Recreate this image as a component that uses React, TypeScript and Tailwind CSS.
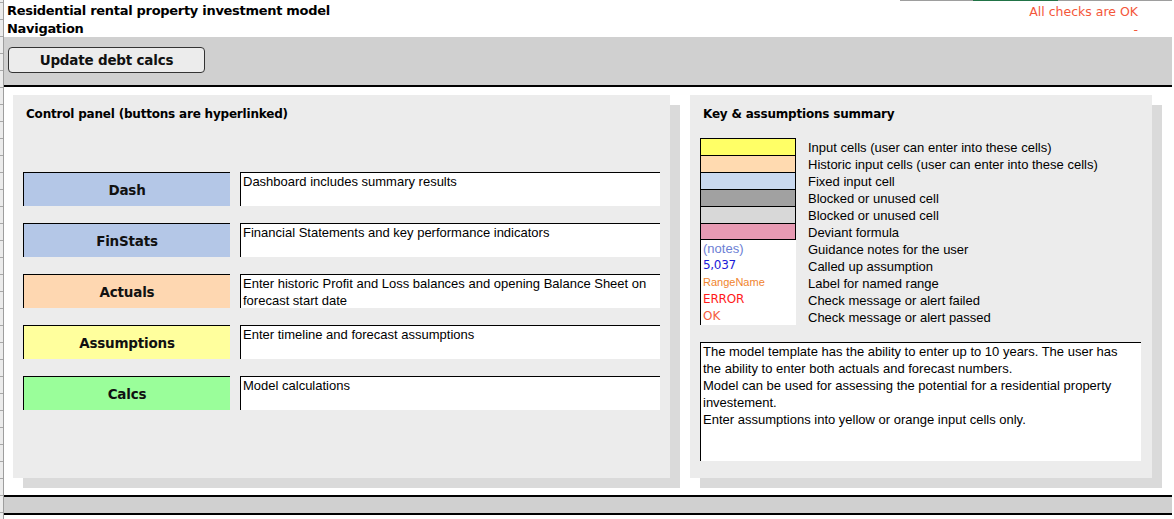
const tahoma = "font-['DejaVu_Sans',Verdana,sans-serif]"
const arial = "font-['Liberation_Sans',Arial,sans-serif]"

const navButtons = [
  { label: 'Dash', color: 'bg-[#b4c7e7]', text: ['Dashboard includes summary results'] },
  { label: 'FinStats', color: 'bg-[#b4c7e7]', text: ['Financial Statements and key performance indicators'] },
  {
    label: 'Actuals',
    color: 'bg-[#fed7b1]',
    text: [
      'Enter historic Profit and Loss balances and opening Balance Sheet on',
      'forecast start date',
    ],
  },
  { label: 'Assumptions', color: 'bg-[#ffff9d]', text: ['Enter timeline and forecast assumptions'] },
  { label: 'Calcs', color: 'bg-[#9afe9a]', text: ['Model calculations'] },
]

const keyRows: { swatch: string; sample?: string; sampleClass?: string; label: string }[] = [
  { swatch: 'bg-[#ffff66] border-t border-r', label: 'Input cells (user can enter into these cells)' },
  { swatch: 'bg-[#ffdab0] border-t border-r', label: 'Historic input cells (user can enter into these cells)' },
  { swatch: 'bg-[#cad9ef] border-t border-r', label: 'Fixed input cell' },
  { swatch: 'bg-[#a1a1a1] border-t border-r', label: 'Blocked or unused cell' },
  { swatch: 'bg-[#d8d8d8] border-t border-r', label: 'Blocked or unused cell' },
  { swatch: 'bg-[#e79ab3] border-t border-r border-b', label: 'Deviant formula' },
  { swatch: 'bg-white', sample: '(notes)', sampleClass: `${arial} text-[13px] text-[#6c80d4]`, label: 'Guidance notes for the user' },
  { swatch: 'bg-white', sample: '5,037', sampleClass: `${tahoma} text-[12px] tracking-[-0.3px] text-[#1a1ad8]`, label: 'Called up assumption' },
  { swatch: 'bg-white', sample: 'RangeName', sampleClass: `${arial} text-[11px] text-[#f0842e]`, label: 'Label for named range' },
  { swatch: 'bg-white', sample: 'ERROR', sampleClass: `${tahoma} text-[12px] tracking-[-0.2px] text-[#ff1a1a]`, label: 'Check message or alert failed' },
  { swatch: 'bg-white', sample: 'OK', sampleClass: `${tahoma} text-[12px] text-[#f4603f]`, label: 'Check message or alert passed' },
]

function ControlPanel() {
  return (
    <section className="flex h-[383px] w-[657px] shrink-0 flex-col bg-[#ececec] shadow-[10px_10px_0_#dadada]">
      <h2 className={`${tahoma} pt-[11px] pl-[13px] text-[12px] leading-[16px] font-bold tracking-[-0.2px] text-black`}>
        Control panel (buttons are hyperlinked)
      </h2>
      <div className="mt-[50px] flex flex-col gap-[17px] pl-[10px]">
        {navButtons.map((item) => (
          <div key={item.label} className="flex h-[34px] gap-[10px]">
            <div
              className={`${tahoma} ${item.color} flex w-[207px] items-center justify-center border-t border-l border-black pt-px text-[13.5px] font-bold tracking-[-0.2px] text-[#111]`}
            >
              {item.label}
            </div>
            <div className={`${arial} w-[420px] border-t border-l border-black bg-white pl-[2px] text-[13px] leading-[17px] text-black`}>
              {item.text.map((line) => (
                <div key={line}>{line}</div>
              ))}
            </div>
          </div>
        ))}
      </div>
    </section>
  )
}

function KeyPanel() {
  return (
    <section className="flex h-[383px] w-[462px] shrink-0 flex-col bg-[#ececec] shadow-[10px_10px_0_#dadada]">
      <h2 className={`${tahoma} pt-[11px] pl-[13px] text-[12px] leading-[16px] font-bold tracking-[-0.2px] text-black`}>
        Key &amp; assumptions summary
      </h2>
      <div className="mt-[16px] flex flex-col pl-[10px]">
        {keyRows.map((row, i) => (
          <div key={i} className="flex h-[17px] items-stretch">
            <div
              className={`${row.swatch} box-border flex w-[96px] items-center border-l border-black pl-[2px] leading-[15px]`}
            >
              {row.sample && <span className={row.sampleClass}>{row.sample}</span>}
            </div>
            <div className={`${arial} pt-px pl-[12px] text-[13px] leading-[17px] text-black`}>{row.label}</div>
          </div>
        ))}
      </div>
      <div
        className={`${arial} mt-[17px] ml-[10px] h-[119px] w-[441px] border-t border-l border-black bg-white pl-[2px] text-[13px] leading-[17px] text-black`}
      >
        <div>The model template has the ability to enter up to 10 years. The user has</div>
        <div>the ability to enter both actuals and forecast numbers.</div>
        <div>Model can be used for assessing the potential for a residential property</div>
        <div>investement.</div>
        <div>Enter assumptions into yellow or orange input cells only.</div>
      </div>
    </section>
  )
}

export default function App() {
  return (
    <div className="flex h-[519px] w-[1174px] overflow-hidden bg-white">
      {/* row header remnant */}
      <div className="w-[4px] shrink-0 border-r border-[#9e9e9e] bg-[#ececec] bg-[repeating-linear-gradient(to_bottom,#a8a8a8_0px,#a8a8a8_1px,transparent_1px,transparent_17px)] bg-[position:0_2px]" />

      <div className="flex min-w-0 flex-1 flex-col pr-[2px]">
        <div className="flex h-px shrink-0">
          <div className="w-[896px]" />
          <div className="w-[73px] bg-[#9e9e9e]" />
          <div className="w-[85px] bg-[#217346]" />
          <div className="flex-1 bg-[#9e9e9e]" />
        </div>

        <header className="flex h-[36px] shrink-0 justify-between pl-[3px]">
          <div className={`${tahoma} pt-px text-[13px] leading-[18px] font-bold tracking-[-0.3px] text-black`}>
            <div>Residential rental property investment model</div>
            <div>Navigation</div>
          </div>
          <div className={`${tahoma} pt-[2px] pr-[34px] text-right text-[12.5px] leading-[18px] text-[#f4573a]`}>
            <div>All checks are OK</div>
            <div>-</div>
          </div>
        </header>

        <div className="h-[48px] shrink-0 bg-[#d0d0d0] pt-[10px] pl-[4px]">
          <button
            className={`${tahoma} h-[26px] w-[197px] rounded-[4px] border border-[#333] bg-[#ececec] text-[13.5px] font-bold tracking-[-0.2px] text-[#111]`}
          >
            Update debt calcs
          </button>
        </div>
        <div className="h-[2px] shrink-0 bg-black" />

        <main className="flex h-[408px] shrink-0 gap-[20px] pt-[8px] pl-[9px]">
          <ControlPanel />
          <KeyPanel />
        </main>

        <div className="h-[2px] shrink-0 bg-black" />
        <div className="h-[16px] shrink-0 bg-[#d0d0d0]" />
        <div className="h-[2px] shrink-0 bg-black" />
      </div>
    </div>
  )
}
